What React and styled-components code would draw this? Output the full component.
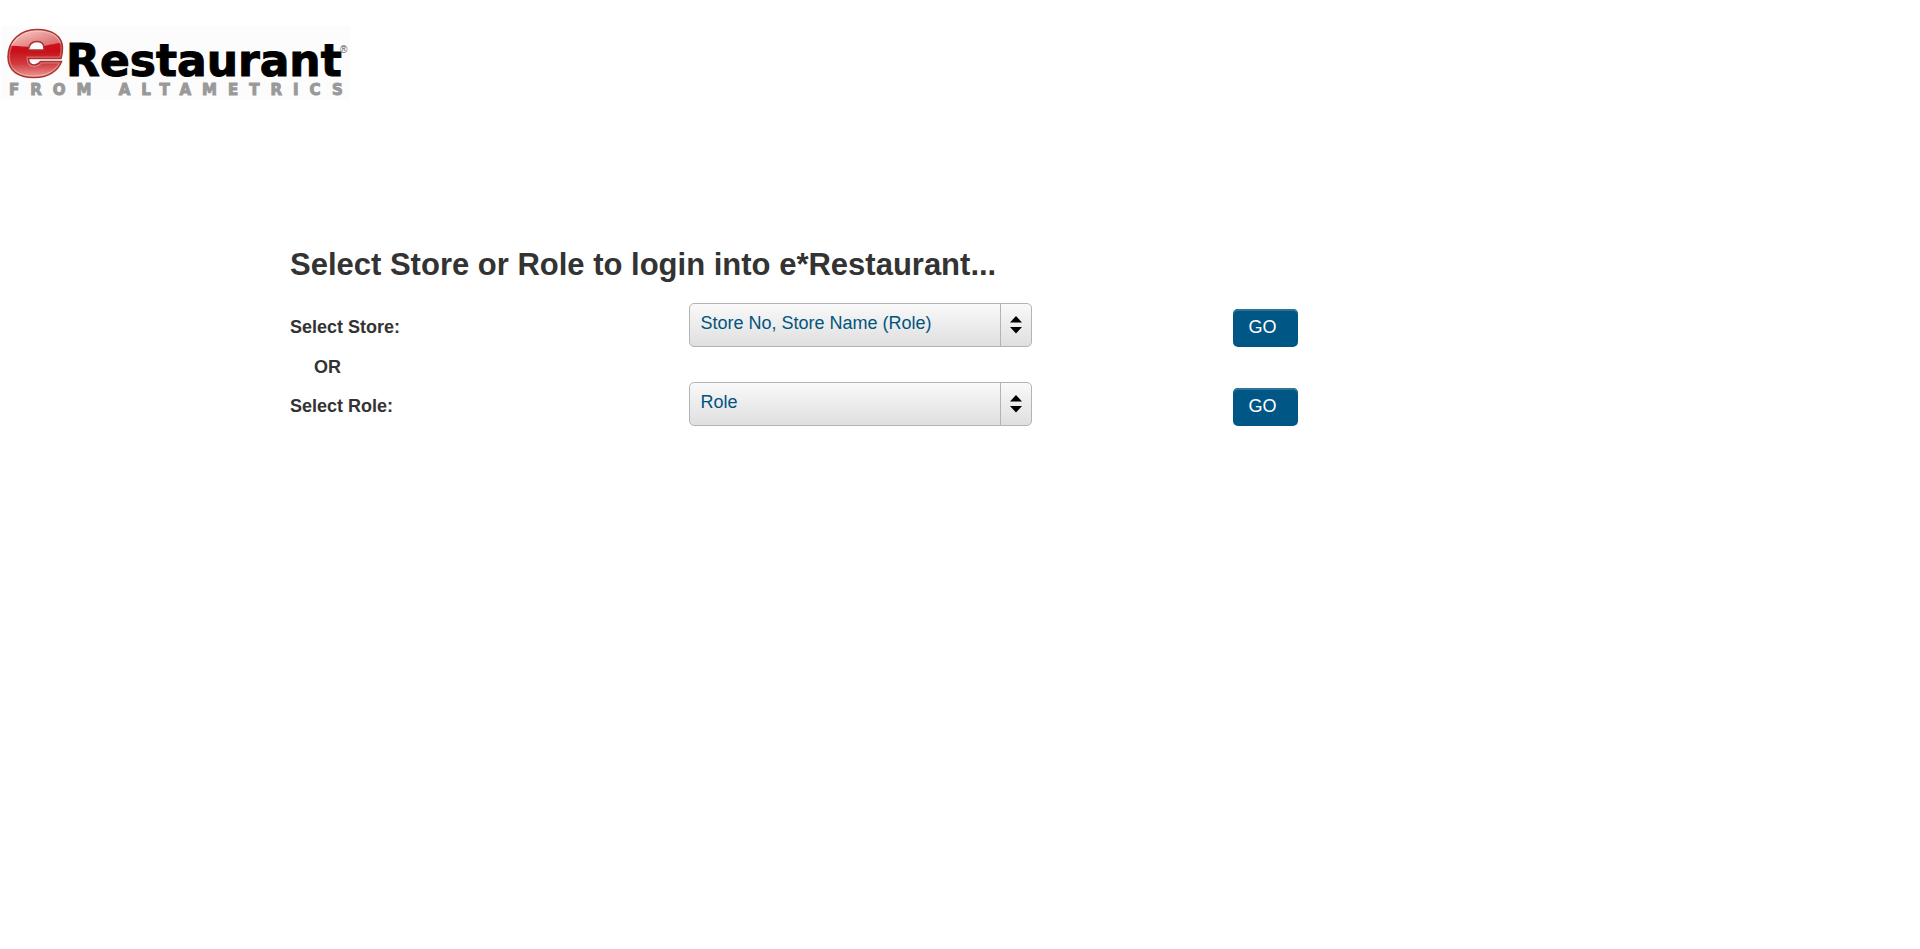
import React from "react";
import styled, { createGlobalStyle } from "styled-components";

const GlobalStyle = createGlobalStyle`
  *, *::before, *::after { box-sizing: border-box; }
  body {
    margin: 0;
    background: #fff;
    color: #333;
    font: 18px/24px "Liberation Sans", Arial, sans-serif;
  }
`;

const Header = styled.header`
  padding: 26px 0 0 1px;
`;

const LogoArt = styled.svg`
  display: block;
  overflow: visible;
`;

const Wordmark = styled.text`
  font-family: "DejaVu Sans", sans-serif;
  font-weight: bold;
  font-size: 44px;
  stroke: #000;
  stroke-width: 1px;
`;

const Tagline = styled.text`
  font-family: "DejaVu Sans", sans-serif;
  font-weight: bold;
  font-size: 15px;
  letter-spacing: 11px;
  fill: #999;
  stroke: #999;
  stroke-width: 1px;
`;

const Registered = styled.text`
  font-family: "Liberation Sans", sans-serif;
  font-size: 10px;
  fill: #555;
`;

const Main = styled.main`
  width: 70%;
  margin: 141px auto 0;
  padding-left: 2px;
`;

const Title = styled.h1`
  margin: 0 0 14px;
  font-size: 31px;
  line-height: 48px;
  font-weight: bold;
`;

const Row = styled.form`
  display: grid;
  grid-template-columns: 400fr 544fr 400fr;
  align-items: center;
`;

const RowLabel = styled.label`
  padding-top: 4px;
  font-weight: bold;
`;

const Or = styled.p`
  margin: 0;
  padding: 5px 0 0 24px;
  line-height: 30px;
  font-weight: bold;
`;

const SelectFrame = styled.div`
  position: relative;
  width: 63%;
`;

const Select = styled.select`
  display: block;
  appearance: none;
  width: 100%;
  height: 44px;
  padding: 0 40px 4px 10px;
  border: 1px solid #b3b3b3;
  border-radius: 5px;
  background: linear-gradient(#f9f9f9, #dfdfdf);
  color: #005580;
  font: inherit;
`;

const Arrows = styled.span`
  position: absolute;
  top: 1px;
  right: 1px;
  bottom: 1px;
  display: flex;
  align-items: center;
  justify-content: center;
  width: 31px;
  border-left: 1px solid #b3b3b3;
  pointer-events: none;
`;

const GoButton = styled.button`
  justify-self: start;
  height: 38px;
  margin-top: 6px;
  padding: 0 21px 2px 16px;
  border: 0;
  border-radius: 5px;
  background: #005785;
  box-shadow: inset 0 2px 0 #2f7399;
  color: #fff;
  font: inherit;
`;

const E_OUTLINE =
  "M37 29.5C52 29.5 62.5 36 62.5 48C62.5 52 62 55 61 58.5H28.500C28.500 62.500 30.500 65 34.500 65C37.500 65 39 63.500 40.500 61.500H61.500C58 71 48 77.500 34 77.500C18 77.500 8 70.500 8 57C8 41 20 29.500 37 29.500Z";

function Logo() {
  return (
    <LogoArt width="349" height="74" viewBox="1 26 349 74" role="img" aria-label="eRestaurant from Altametrics">
      <defs>
        <linearGradient id="body" x1="0" y1="0" x2="0" y2="1">
          <stop offset="0" stopColor="#d9141c" />
          <stop offset="0.45" stopColor="#c90f18" />
          <stop offset="0.7" stopColor="#d03a3e" />
          <stop offset="1" stopColor="#f0a8a2" />
        </linearGradient>
        <linearGradient id="gloss" x1="0" y1="0" x2="1" y2="1">
          <stop offset="0" stopColor="#fbe3e0" />
          <stop offset="0.5" stopColor="#eb9a98" />
          <stop offset="1" stopColor="#d35a5d" />
        </linearGradient>
        <clipPath id="outline">
          <path d={E_OUTLINE} />
        </clipPath>
      </defs>
      <rect x="1" y="26" width="349" height="74" fill="#fcfcfc" />
      <g clipPath="url(#outline)">
        <rect x="7" y="28" width="56" height="51" fill="url(#body)" />
        <path d="M7 28H63V43C55 43 50 45 44 46C31 49 19 45 9 46Z" fill="url(#gloss)" />
        <path d={E_OUTLINE} fill="none" stroke="#fff" strokeWidth="4" strokeOpacity="0.3" />
      </g>
      <path d={E_OUTLINE} fill="none" stroke="#a8332f" strokeWidth="1.5" />
      <path d="M28.500 50C29 45 32 41.500 37 41.500C42 41.500 44.500 44 44 50Z" fill="#fcfcfc" stroke="#a8332f" strokeWidth="1.5" />
      <Wordmark x="66" y="76">Restaurant</Wordmark>
      <Registered x="340" y="53">®</Registered>
      <Tagline x="9" y="95">FROM ALTAMETRICS</Tagline>
    </LogoArt>
  );
}

function ChoiceRow({ id, label, placeholder }) {
  return (
    <Row onSubmit={(event) => event.preventDefault()}>
      <RowLabel htmlFor={id}>{label}</RowLabel>
      <SelectFrame>
        <Select id={id}>
          <option>{placeholder}</option>
        </Select>
        <Arrows aria-hidden="true">
          <svg width="12" height="18" viewBox="0 0 12 18">
            <path d="M6 0 12 6.500H0ZM0 11H12L6 17.500Z" />
          </svg>
        </Arrows>
      </SelectFrame>
      <GoButton type="submit">GO</GoButton>
    </Row>
  );
}

export default function App() {
  return (
    <>
      <GlobalStyle />
      <Header>
        <Logo />
      </Header>
      <Main>
        <Title>Select Store or Role to login into e*Restaurant...</Title>
        <ChoiceRow id="store" label="Select Store:" placeholder="Store No, Store Name (Role)" />
        <Or>OR</Or>
        <ChoiceRow id="role" label="Select Role:" placeholder="Role" />
      </Main>
    </>
  );
}
